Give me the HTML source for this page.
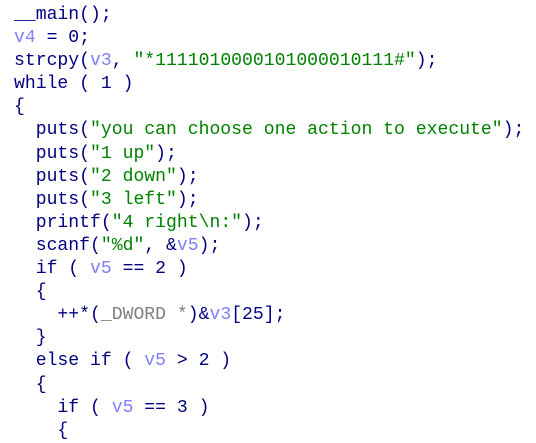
<!DOCTYPE html>
<html><head><meta charset="utf-8"><style>
html,body{margin:0;padding:0;background:#fff;width:536px;height:423px;overflow:hidden}
pre{margin:0;position:absolute;left:14px;top:4px;font-family:"Liberation Mono",monospace;font-size:18.1px;line-height:23.1px;color:#000080}
.s{color:#008000}.v{color:#7f7fff}.g{color:#808080}
</style></head><body><pre>__main();
<span class="v">v4</span> = 0;
strcpy(<span class="v">v3</span>, <span class="s">"*1111010000101000010111#"</span>);
while ( 1 )
{
  puts(<span class="s">"you can choose one action to execute"</span>);
  puts(<span class="s">"1 up"</span>);
  puts(<span class="s">"2 down"</span>);
  puts(<span class="s">"3 left"</span>);
  printf(<span class="s">"4 right\n:"</span>);
  scanf(<span class="s">"%d"</span>, &amp;<span class="v">v5</span>);
  if ( <span class="v">v5</span> == 2 )
  {
    ++*(<span class="g">_DWORD *</span>)&amp;<span class="v">v3</span>[25];
  }
  else if ( <span class="v">v5</span> &gt; 2 )
  {
    if ( <span class="v">v5</span> == 3 )
    {
</pre></body></html>
